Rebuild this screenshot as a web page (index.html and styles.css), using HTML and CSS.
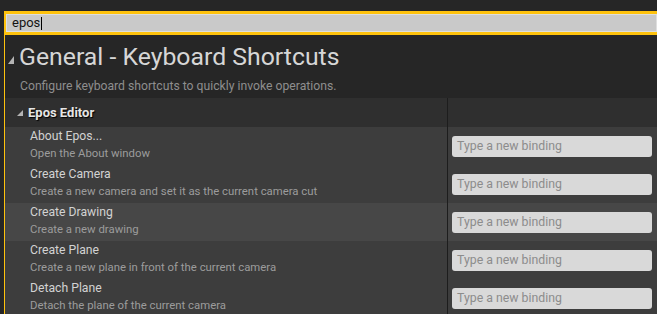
FILE: index.html
```html
<!DOCTYPE html>
<html>
<head>
<meta charset="utf-8">
<link rel="stylesheet" href="styles.css">
</head>
<body>
<div class="search"><div class="field">epos<span class="caret"></span></div></div>
<div class="panel">
  <div class="intro">
    <div class="title-line">
      <svg class="tri big" width="6" height="8" viewBox="0 0 6 8"><polygon points="6,0 6,8 0,8"/></svg>
      <h1>General - Keyboard Shortcuts</h1>
    </div>
    <p class="subtitle">Configure keyboard shortcuts to quickly invoke operations.</p>
  </div>
  <div class="category">
    <div class="cat-name">
      <svg class="tri" width="6" height="6" viewBox="0 0 6 6"><polygon points="6,0 6,6 0,6"/></svg>
      <span>Epos Editor</span>
    </div>
    <div class="cat-value"></div>
  </div>
  <div class="row">
    <div class="name"><div class="cmd">About Epos...</div><div class="desc">Open the About window</div></div>
    <div class="value"><div class="binding">Type a new binding</div></div>
  </div>
  <div class="row">
    <div class="name"><div class="cmd">Create Camera</div><div class="desc">Create a new camera and set it as the current camera cut</div></div>
    <div class="value"><div class="binding">Type a new binding</div></div>
  </div>
  <div class="row hover">
    <div class="name"><div class="cmd">Create Drawing</div><div class="desc">Create a new drawing</div></div>
    <div class="value"><div class="binding">Type a new binding</div></div>
  </div>
  <div class="row">
    <div class="name"><div class="cmd">Create Plane</div><div class="desc">Create a new plane in front of the current camera</div></div>
    <div class="value"><div class="binding">Type a new binding</div></div>
  </div>
  <div class="row">
    <div class="name"><div class="cmd">Detach Plane</div><div class="desc">Detach the plane of the current camera</div></div>
    <div class="value"><div class="binding">Type a new binding</div></div>
  </div>
</div>
</body>
</html>
```
FILE: styles.css
```css
html, body {
  margin: 0;
  padding: 0;
  background: #262626;
  font-family: Roboto, "Open Sans", sans-serif;
  overflow: hidden;
  height: 314px;
}
.search {
  margin: 11px 0 0 4px;
  height: 24px;
  box-sizing: border-box;
  border-top: 3px solid #fec20d;
  border-bottom: 3px solid #fec20d;
  border-left: 2px solid #fec20d;
}
.field {
  height: 18px;
  box-sizing: border-box;
  background: #c9c9c9;
  border: 1px solid #dedede;
  padding-left: 5px;
  font-size: 13px;
  line-height: 16px;
  color: #141414;
  display: flex;
  align-items: center;
}
.caret {
  display: inline-block;
  width: 1px;
  height: 13px;
  background: #000;
  margin-left: 1px;
}
.panel {
  margin-left: 4px;
  border-left: 1px solid #fec20d;
  height: 279px;
}
.intro {
  height: 63px;
  box-sizing: border-box;
  padding-top: 8px;
}
.title-line {
  display: flex;
  align-items: center;
  height: 28px;
}
.tri {
  fill: #b4b4b4;
  flex: none;
}
.tri.big {
  margin: 5px 5px 0 3px;
}
h1 {
  margin: 0;
  font-size: 24.8px;
  line-height: 28px;
  font-weight: 400;
  color: #d6d6d6;
}
.subtitle {
  margin: 7px 0 0 15px;
  font-size: 12.2px;
  line-height: 16px;
  color: #8e8e8e;
}
.category, .row {
  display: grid;
  grid-template-columns: 442px 1fr;
}
.category {
  height: 29px;
  background: #2f2f2f;
}
.cat-name {
  display: flex;
  align-items: center;
  padding-left: 12px;
  gap: 5px;
  font-size: 13px;
  font-weight: 700;
  color: #e6e6e6;
  text-shadow: 1px 1px 1px #000;
}
.cat-name .tri {
  margin-top: 1px;
}
.cat-value, .value {
  border-left: 1px solid #1d1d1d;
}
.row {
  height: 38px;
  background: #3d3d3d;
}
.row.hover {
  background: #474747;
}
.name {
  padding: 1px 0 0 25px;
}
.cmd {
  font-size: 12.2px;
  line-height: 17px;
  color: #d2d2d2;
}
.desc {
  margin-top: 1px;
  font-size: 11.35px;
  line-height: 14px;
  color: #9c9c9c;
}
.value {
  display: flex;
  align-items: center;
  padding-left: 4px;
}
.binding {
  width: 200px;
  height: 21px;
  box-sizing: border-box;
  background: #d9d9d9;
  border-radius: 3px;
  padding-left: 5px;
  font-size: 12.3px;
  line-height: 21px;
  color: #8c8c8c;
}
```
